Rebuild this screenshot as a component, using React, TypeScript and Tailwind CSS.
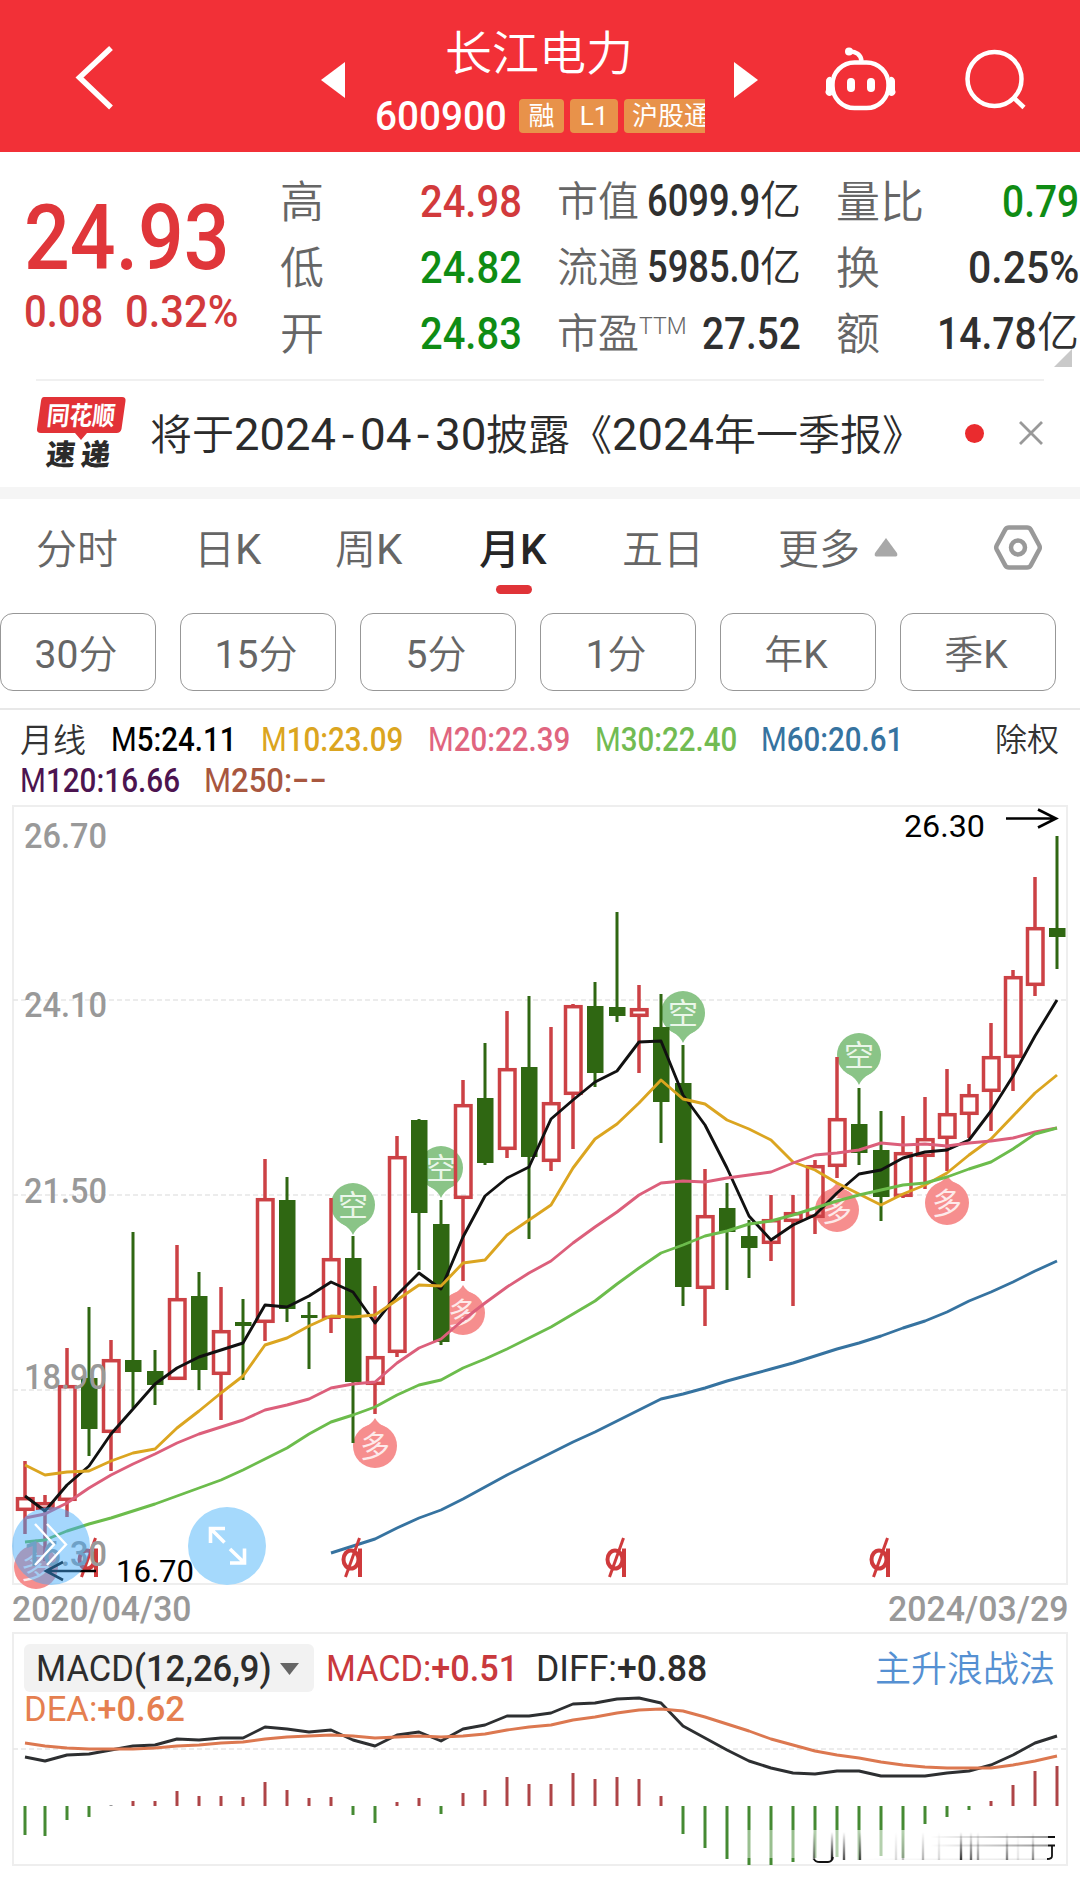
import { useLayoutEffect, useRef, type ReactNode } from "react";
import clsx from "clsx";

type Candle = [up: 0 | 1, high: number, top: number, bottom: number, low: number];

const candles: Candle[] = [
  [1, 1460, 1496, 1510, 1533], [1, 1494, 1501, 1509, 1560], [1, 1347, 1384, 1500, 1516], [0, 1306, 1377, 1428, 1455],
  [1, 1339, 1358, 1432, 1470], [0, 1231, 1359, 1371, 1407], [0, 1349, 1370, 1384, 1404], [1, 1244, 1297, 1379, 1379],
  [0, 1271, 1295, 1369, 1389], [1, 1286, 1329, 1374, 1419], [0, 1298, 1321, 1325, 1379], [1, 1158, 1197, 1322, 1340],
  [0, 1176, 1199, 1308, 1321], [0, 1301, 1314, 1317, 1368], [1, 1197, 1257, 1318, 1332], [0, 1235, 1257, 1381, 1442],
  [1, 1285, 1355, 1384, 1413], [1, 1135, 1155, 1352, 1356], [0, 1118, 1119, 1212, 1269], [0, 1199, 1223, 1341, 1344],
  [1, 1079, 1103, 1198, 1280], [0, 1042, 1097, 1162, 1164], [1, 1010, 1067, 1149, 1157], [0, 995, 1066, 1156, 1238],
  [1, 1026, 1101, 1161, 1170], [1, 1003, 1004, 1094, 1148], [0, 981, 1005, 1072, 1086], [0, 911, 1006, 1015, 1021],
  [1, 984, 1007, 1016, 1072], [0, 993, 1026, 1101, 1142], [0, 1044, 1082, 1286, 1305], [1, 1168, 1214, 1288, 1325],
  [0, 1182, 1207, 1231, 1289], [0, 1219, 1235, 1247, 1277], [1, 1194, 1218, 1243, 1260], [1, 1194, 1211, 1221, 1305],
  [1, 1159, 1164, 1217, 1233], [1, 1056, 1117, 1166, 1177], [0, 1087, 1123, 1152, 1164], [0, 1110, 1149, 1196, 1220],
  [1, 1115, 1151, 1196, 1197], [1, 1096, 1137, 1156, 1188], [1, 1068, 1112, 1138, 1170], [1, 1083, 1093, 1114, 1137],
  [1, 1022, 1055, 1091, 1130], [1, 969, 975, 1057, 1090], [1, 876, 926, 985, 995], [0, 835, 927, 936, 968],
];

const ma5 = [1495, 1510, 1484, 1465, 1433, 1408, 1383, 1367, 1356, 1349, 1342, 1304, 1306, 1295, 1281, 1291, 1322, 1294, 1272, 1288, 1236, 1195, 1177, 1166, 1118, 1099, 1081, 1070, 1041, 1040, 1094, 1124, 1167, 1215, 1239, 1224, 1214, 1192, 1173, 1169, 1157, 1151, 1149, 1139, 1110, 1075, 1035, 999];
const ma10 = [1464, 1474, 1471, 1470, 1460, 1452, 1448, 1427, 1410, 1392, 1375, 1344, 1337, 1325, 1315, 1316, 1314, 1299, 1284, 1285, 1262, 1259, 1234, 1219, 1204, 1167, 1138, 1123, 1102, 1079, 1098, 1103, 1119, 1128, 1139, 1161, 1169, 1182, 1193, 1204, 1193, 1184, 1172, 1154, 1138, 1115, 1092, 1074];
const ma20 = [1517, 1513, 1502, 1487, 1474, 1463, 1453, 1442, 1433, 1426, 1419, 1409, 1404, 1398, 1387, 1383, 1381, 1362, 1347, 1338, 1319, 1302, 1286, 1272, 1260, 1242, 1226, 1211, 1194, 1182, 1180, 1181, 1177, 1174, 1171, 1162, 1154, 1152, 1149, 1142, 1144, 1143, 1145, 1142, 1140, 1137, 1131, 1127];
const ma30 = [1541, 1539, 1530, 1523, 1517, 1510, 1503, 1495, 1487, 1479, 1469, 1458, 1447, 1433, 1421, 1414, 1406, 1394, 1384, 1379, 1367, 1358, 1348, 1337, 1326, 1313, 1300, 1283, 1267, 1252, 1244, 1235, 1230, 1223, 1220, 1214, 1207, 1200, 1194, 1189, 1184, 1182, 1176, 1168, 1161, 1148, 1133, 1127];
const ma60 = [1552, 1545, 1538, 1527, 1517, 1509, 1498, 1486, 1474, 1463, 1452, 1441, 1431, 1420, 1409, 1398, 1393, 1387, 1380, 1374, 1368, 1362, 1355, 1348, 1342, 1335, 1327, 1320, 1311, 1300, 1291, 1281, 1270, 1260];

const diff = [1757, 1761, 1755, 1754, 1750, 1746, 1745, 1739, 1740, 1738, 1738, 1727, 1729, 1732, 1730, 1740, 1746, 1735, 1732, 1741, 1729, 1725, 1716, 1716, 1713, 1704, 1703, 1699, 1698, 1703, 1726, 1738, 1750, 1761, 1768, 1773, 1774, 1771, 1771, 1776, 1776, 1776, 1773, 1771, 1765, 1755, 1743, 1736];
const dea = [1743, 1746, 1748, 1749, 1749, 1749, 1748, 1746, 1745, 1743, 1742, 1739, 1737, 1736, 1735, 1736, 1738, 1737, 1736, 1737, 1736, 1734, 1730, 1727, 1725, 1720, 1717, 1713, 1710, 1709, 1711, 1717, 1724, 1731, 1739, 1745, 1751, 1755, 1758, 1762, 1765, 1767, 1768, 1768, 1768, 1765, 1761, 1756];
const bars = [1835, 1836, 1820, 1817, 1805, 1801, 1801, 1791, 1796, 1796, 1797, 1782, 1790, 1798, 1797, 1815, 1823, 1802, 1798, 1814, 1793, 1790, 1777, 1784, 1784, 1773, 1779, 1777, 1779, 1796, 1834, 1848, 1859, 1865, 1865, 1862, 1858, 1857, 1860, 1856, 1858, 1824, 1817, 1810, 1801, 1785, 1771, 1766];
const BAR_BASE = 1806;

const xAt = (i: number) => (i === 0 ? 25 : 23 + i * 22);
const toPoints = (ys: number[], from = 0) => ys.map((y, i) => `${xAt(i + from)},${y}`).join(" ");

const shortPins = [[353, 1204], [441, 1167], [683, 1012], [859, 1054]];
const longPins = [[36, 1566], [375, 1445], [463, 1312], [837, 1209], [947, 1202]];

// Squeezes its text horizontally so that it takes exactly w pixels
function Fit({ w, className, children }: { w: number; className?: string; children: ReactNode }) {
  const ref = useRef<HTMLSpanElement>(null);
  useLayoutEffect(() => {
    const el = ref.current;
    if (el) el.style.transform = `scaleX(${w / el.offsetWidth})`;
  }, [w]);
  return (
    <span className={clsx("inline-block shrink-0 whitespace-nowrap", className)} style={{ width: w }}>
      <span ref={ref} className="inline-block origin-left">
        {children}
      </span>
    </span>
  );
}

function Header() {
  return (
    <header className="flex h-[152px] items-start bg-[#f23037] text-white">
      <svg className="ml-[70px] mt-10 h-[76px] w-[50px]" viewBox="70 40 50 76" fill="none" stroke="white" strokeWidth="5.5">
        <path d="M111 48 79.500 77.500 111 107.500" />
      </svg>
      <svg className="ml-[201px] mt-[60px] h-10 w-6" viewBox="321 60 24 40" fill="white">
        <path d="M321 80 345 62V98Z" />
      </svg>
      <div className="ml-[30px] w-[330px] pt-[30px]">
        <h1 className="pl-[70px] text-[47px] leading-[47px] font-[350]">长江电力</h1>
        <div className="mt-[22px] flex h-[34px] items-center">
          <Fit w={132} className="text-[41px] leading-[44px] font-medium">600900</Fit>
          <div className="ml-3 flex w-[186px] gap-1.5 overflow-hidden text-[26px] leading-[34px] font-normal">
            <span className="w-[45px] shrink-0 rounded bg-[#e8924a] text-center">融</span>
            <span className="w-12 shrink-0 rounded bg-[#e8924a] text-center">L1</span>
            <span className="shrink-0 rounded bg-[#e8924a] pr-2.5 pl-2">沪股通</span>
          </div>
        </div>
      </div>
      <svg className="ml-[29px] mt-[60px] h-10 w-6" viewBox="735 60 24 40" fill="white">
        <path d="M759 80 735 62V98Z" />
      </svg>
      <svg className="ml-[64px] mt-10 h-20 w-20" viewBox="822 40 80 80" fill="none" stroke="white" strokeWidth="4.500">
        <rect x="832.500" y="62.500" width="56" height="45.500" rx="22" />
        <path d="M849 51.500C856 51 861 55 861.500 61" />
        <circle cx="849" cy="51.500" r="4" fill="white" stroke="none" />
        <path d="M831 77a4 4 0 0 0-5 4v9a4 4 0 0 0 6 5ZM890 77a4 4 0 0 1 5 4v9a4 4 0 0 1-6 5Z" fill="white" stroke="none" />
        <path d="M851 82v6M871 82v6" strokeWidth="8" strokeLinecap="round" />
      </svg>
      <svg className="ml-[58px] mt-10 h-20 w-20" viewBox="960 40 80 80" fill="none" stroke="white" strokeWidth="4.500">
        <circle cx="994.500" cy="79" r="27" />
        <path d="m1013 97 11 10.500" />
      </svg>
    </header>
  );
}

function QuoteRow({ label, children }: { label: ReactNode; children: ReactNode }) {
  return (
    <div className="flex h-[66px] items-center justify-between">
      <span className="-ml-px flex pt-[3px] text-[#666] font-[350]">{label}</span>
      <span className="flex items-center font-medium text-[#303030]">{children}</span>
    </div>
  );
}

function Quote() {
  return (
    <section className="relative flex h-[227px] pt-4 text-[44px] leading-none">
      <div className="w-[281px] pl-6 text-[#e0363a]">
        <Fit w={206} className="mt-[26px] text-[90px] font-medium">24.93</Fit>
        <div className="mt-[5px] flex gap-[22px] text-[45px] font-medium text-[#d23a3c]">
          <Fit w={79}>0.08</Fit>
          <Fit w={113}>0.32%</Fit>
        </div>
      </div>
      <div className="w-[241px]">
        <QuoteRow label="高"><Fit w={102} className="text-[45px] text-[#d23a3c]">24.98</Fit></QuoteRow>
        <QuoteRow label="低"><Fit w={102} className="text-[45px] text-[#0f8c14]">24.82</Fit></QuoteRow>
        <QuoteRow label="开"><Fit w={102} className="text-[45px] text-[#0f8c14]">24.83</Fit></QuoteRow>
      </div>
      <div className="ml-9 w-[243px] text-[41px]">
        <QuoteRow label="市值">
          <Fit w={113} className="text-[44px]">6099.9</Fit>
          <span className="font-[350]">亿</span>
        </QuoteRow>
        <QuoteRow label="流通">
          <Fit w={113} className="text-[44px]">5985.0</Fit>
          <span className="font-[350]">亿</span>
        </QuoteRow>
        <QuoteRow label={<>市盈<Fit w={48} className="pt-px text-[23px] font-light">TTM</Fit></>}>
          <Fit w={99} className="text-[45px]">27.52</Fit>
        </QuoteRow>
      </div>
      <div className="ml-9 w-[242px]">
        <QuoteRow label="量比"><Fit w={77} className="text-[45px] text-[#0f8c14]">0.79</Fit></QuoteRow>
        <QuoteRow label="换"><Fit w={111} className="text-[45px]">0.25%</Fit></QuoteRow>
        <QuoteRow label="额">
          <Fit w={100} className="text-[45px]">14.78</Fit>
          <span className="text-[42px] font-[350]">亿</span>
        </QuoteRow>
      </div>
      <svg className="absolute right-2 bottom-3 size-[18px]" viewBox="0 0 18 18" fill="#c9c9c9">
        <path d="M18 0V18H0Z" />
      </svg>
    </section>
  );
}

function News() {
  return (
    <section className="mx-9 flex h-[108px] border-t-2 border-[#f0f0f0] leading-none">
      <div className="relative mt-4 w-[90px] shrink-0">
        <svg className="absolute inset-0 h-11 w-[90px]" viewBox="36 397 90 44" fill="#e23237">
          <path d="M44 397h78q4 0 3.500 4l-4 28q-1 4-5 4H87l-6 7-6-7H41q-4.500 0-4-4l4-28q.5-4 3-4Z" />
        </svg>
        <div className="relative pt-[7px] text-center">
          <Fit w={68} className="-skew-x-6 text-[26px] leading-[25px] font-bold text-white">同花顺</Fit>
        </div>
        <div className="flex -skew-x-6 justify-center gap-1.5 pt-[12px] pr-1 text-[29px] leading-[29px] font-black text-[#2b2b2b]">
          <span>速</span>
          <span>递</span>
        </div>
      </div>
      <div className="ml-6 flex w-[766px] shrink-0 items-center pt-[3px] text-[42px] font-[350] whitespace-nowrap text-[#2b2b2b]">
        <span className="shrink-0">将于</span>
        <Fit w={102} className="-mt-0.5 text-[44px] font-normal">2024</Fit>
        <span className="-mt-0.5 w-6 shrink-0 text-center text-[44px] font-normal">-</span>
        <Fit w={51} className="-mt-0.5 text-[44px] font-normal">04</Fit>
        <span className="-mt-0.5 w-6 shrink-0 text-center text-[44px] font-normal">-</span>
        <Fit w={51} className="-mt-0.5 text-[44px] font-normal">30</Fit>
        <span className="shrink-0">披露《</span>
        <Fit w={102} className="-mt-0.5 text-[44px] font-normal">2024</Fit>
        <span className="shrink-0">年一季报》</span>
      </div>
      <span className="mt-[43px] ml-[49px] size-[19px] shrink-0 rounded-full bg-[#ea2b2e]" />
      <svg className="mt-10 ml-[35px] size-6 shrink-0" viewBox="0 0 24 24" stroke="#999" strokeWidth="2.800">
        <path d="M1 1 23 23M23 1 1 23" />
      </svg>
    </section>
  );
}

function Tabs() {
  return (
    <nav className="flex h-[114px] items-start pt-[29px] pl-9 text-[41px] leading-[44px] font-[350] text-[#666]">
      <span className="w-[158px]">分时</span>
      <span className="w-[141px]">日<span className="text-[42px] font-normal">K</span></span>
      <span className="w-[144px]">周<span className="text-[42px] font-normal">K</span></span>
      <span className="flex w-[143px] flex-col font-medium text-[#262626]">
        <span>月<span className="text-[42px]">K</span></span>
        <i className="mt-[13px] ml-[17px] h-[9px] w-9 rounded-full bg-[#e03338]" />
      </span>
      <span className="w-[156px]">五日</span>
      <span>更多</span>
      <svg className="mt-2.5 ml-[14px] h-[19px] w-6" viewBox="0 0 24 19" fill="#a8a8a8">
        <path d="M12 0 23 15q1 3-1 3.500H2Q0 18 1 15Z" />
      </svg>
      <svg className="-mt-1.5 ml-[94px] size-[52px]" viewBox="994 521 52 52" fill="none" stroke="#999" strokeWidth="4.500">
        <path d="M1011 526.500h18q2.500 0 3.800 2.200l8.500 15.800q1 2 0 4l-8.500 15.800q-1.300 2.200-3.800 2.200h-18q-2.500 0-3.800-2.200l-8.500-15.800q-1-2 0-4l8.500-15.800q1.300-2.200 3.800-2.200Z" />
        <circle cx="1020" cy="546.500" r="7" />
      </svg>
    </nav>
  );
}

function Periods() {
  return (
    <div className="flex h-[97px] gap-6 border-b-2 border-[#e8e8e8]">
      {[["30", "分"], ["15", "分"], ["5", "分"], ["1", "分"], ["年", "K"], ["季", "K"]].map(([a, b]) => (
        <button
          key={a}
          className="flex h-[78px] w-[156px] shrink-0 items-center justify-center rounded-[13px] border border-[#979797] pt-1.5 pr-1 text-[39px] leading-none font-[350] text-[#666]"
        >
          <span className={clsx(b === "分" && "font-normal")}>{a}</span>
          <span className={clsx(b === "K" && "font-normal")}>{b}</span>
        </button>
      ))}
    </div>
  );
}

function Ma({ name, value, w, className }: { name: string; value: string; w: number; className: string }) {
  return (
    <Fit w={w} className={className}>
      <span className="font-normal">M</span>
      {name}:{value}
    </Fit>
  );
}

function Legend() {
  return (
    <div className="h-[94px] pt-2 pl-5 text-[33px] leading-none font-medium">
      <div className="flex h-[42px] items-center">
        <span className="w-[91px] pt-0.5 font-[350] text-[#333]">月线</span>
        <Ma name="5" value="24.11" w={125} className="text-black" />
        <Ma name="10" value="23.09" w={142} className="ml-[25px] text-[#dba520]" />
        <Ma name="20" value="22.39" w={142} className="ml-[25px] text-[#e0657f]" />
        <Ma name="30" value="22.40" w={142} className="ml-[25px] text-[#72bb52]" />
        <Ma name="60" value="20.61" w={142} className="ml-6 text-[#3673a0]" />
        <span className="ml-[92px] pt-0.5 text-[32px] font-[350] text-[#333]">除权</span>
      </div>
      <div className="flex h-10 items-center">
        <Ma name="120" value="16.66" w={160} className="text-[#4c1450]" />
        <Ma name="250" value="−−" w={123} className="ml-6 text-[#a8573f]" />
      </div>
    </div>
  );
}

function ExMark({ x }: { x: number }) {
  return (
    <g transform={`translate(${x} 0)`} fill="none" stroke="#cf3a3c" strokeWidth="4">
      <path d="M7 1547.500V1576" />
      <ellipse cx="-2" cy="1558.500" rx="7.500" ry="9" />
      <path d="M6.500 1537-7.500 1576" strokeWidth="3" />
    </g>
  );
}

function Axis({ x, y, w, children, size = 35, className = "fill-[#999] font-medium" }: { x: number; y: number; w: number; children: string; size?: number; className?: string }) {
  return (
    <text x={x} y={y} fontSize={size} textLength={w} lengthAdjust="spacingAndGlyphs" className={className}>
      {children}
    </text>
  );
}

function KChart() {
  return (
    <svg className="block h-[782px] w-[1080px] overflow-visible" viewBox="0 803 1080 782" fill="none">
      <rect x="13" y="805" width="1054" height="778" stroke="#eee" strokeWidth="2" />
      {[999, 1194, 1389].map((y) => (
        <path key={y} d={`M13 ${y}H1066`} stroke="#e6e6e6" strokeWidth="1.500" strokeDasharray="5 3" />
      ))}

      {shortPins.map(([x, y]) => (
        <g key={x}>
          <path d={`M${x - 12} ${y + 18}Q${x - 3} ${y + 23} ${x} ${y + 30}Q${x + 3} ${y + 23} ${x + 12} ${y + 18}Z`} fill="#8ac487" />
          <circle cx={x} cy={y} r="22" fill="#8ac487" />
          <text x={x} y={y + 11} fontSize="30" textAnchor="middle" className="fill-[#eaf6e9]">空</text>
        </g>
      ))}
      {longPins.map(([x, y]) => (
        <g key={x}>
          <path d={`M${x - 12} ${y - 18}Q${x - 3} ${y - 22} ${x} ${y - 28}Q${x + 3} ${y - 22} ${x + 12} ${y - 18}Z`} fill="#f68e8e" />
          <circle cx={x} cy={y} r="22" fill="#f68e8e" />
          <text x={x} y={y + 11} fontSize="30" textAnchor="middle" className="fill-[#fdeaea]">多</text>
        </g>
      ))}

      {candles.map(([up, high, top, bottom, low], i) => {
        const x = xAt(i);
        return up ? (
          <g key={i} stroke="#cc4145" strokeWidth="3.500">
            <path d={`M${x} ${high}V${top}M${x} ${bottom}V${low}`} />
            <rect x={x - 7.5} y={top + 1.7} width="15.500" height={Math.max(bottom - top - 3.4, 1)} />
          </g>
        ) : (
          <g key={i} fill="#2f6712">
            <rect x={x - 1.5} y={high} width="3" height={low - high} />
            <rect x={x - 8} y={top} width="16.500" height={bottom - top} />
          </g>
        );
      })}

      <g strokeWidth="2.900" strokeLinejoin="round">
        <polyline points={toPoints(ma5)} stroke="#111" />
        <polyline points={toPoints(ma10)} stroke="#dba520" />
        <polyline points={toPoints(ma20)} stroke="#dc5f7b" />
        <polyline points={toPoints(ma30)} stroke="#6cbc4c" />
        <polyline points={toPoints(ma60, 14)} stroke="#3673a0" />
      </g>

      {[89, 353, 617, 881].map((x) => (
        <ExMark key={x} x={x} />
      ))}

      <Axis x={24} y={847} w={83}>26.70</Axis>
      <Axis x={24} y={1016} w={83}>24.10</Axis>
      <Axis x={24} y={1202} w={83}>21.50</Axis>
      <Axis x={24} y={1388} w={83}>18.90</Axis>
      <Axis x={24} y={1565} w={83}>16.30</Axis>

      <Axis x={904} y={836} w={81} size={31} className="fill-black">26.30</Axis>
      <path d="M1006 817.500H1056M1038 808.500 1056 817.500 1038 826.500" stroke="#000" strokeWidth="2.600" />
      <Axis x={116} y={1581} w={78} size={31} className="fill-black">16.70</Axis>
      <path d="M96 1570H46M63 1561 46 1570 63 1579" stroke="#000" strokeWidth="2.600" />

      <circle cx="51" cy="1545" r="39" fill="#3fa9fb" fillOpacity=".47" />
      <path d="M35 1523 54 1543.500 35 1564M47 1523 66 1543.500 47 1564" stroke="#fff" strokeWidth="2.400" />
      <circle cx="227" cy="1545" r="39" fill="#a5d9fc" />
      <path d="M225 1527.500H210.500V1542M210.500 1527.500 224.500 1541.500M230 1562H244.500V1547.500M244.500 1562 230 1548" stroke="#fff" strokeWidth="3.600" />
    </svg>
  );
}

function Watermark() {
  const streaks: [number, number][] = [
    [814, 0.5], [832, 0.9], [844, 0.7], [860, 0.7], [896, 0.15], [903, 0.25], [923, 0.3], [939, 0.15],
    [961, 0.8], [971, 0.6], [978, 0.4], [1007, 0.5], [1018, 0.1], [1033, 0.45],
  ];
  return (
    <g>
      <defs>
        <linearGradient id="fade" x1="0" y1="0" x2="0" y2="1">
          <stop offset="0" stopColor="#000" stopOpacity="0" />
          <stop offset="1" stopColor="#000" />
        </linearGradient>
        <linearGradient id="side" x1="0" y1="0" x2="1" y2="0">
          <stop offset="0" stopColor="#000" stopOpacity="0" />
          <stop offset="1" stopColor="#000" stopOpacity=".4" />
        </linearGradient>
      </defs>
      <rect x="745" y="1830" width="65" height="28" fill="#fff" fillOpacity=".45" />
      <rect x="810" y="1830" width="235" height="32" fill="#fff" fillOpacity=".6" />
      {streaks.map(([x, o]) => (
        <rect key={x} x={x - 1.2} y="1832" width="2.400" height="28" fill="url(#fade)" opacity={o} />
      ))}
      <path d="M814 1859Q815 1862 820 1862H828Q832 1862 833 1857" stroke="#111" strokeWidth="1.800" />
      <rect x="930" y="1836" width="118" height="2" fill="url(#side)" />
      <rect x="930" y="1844.500" width="118" height="2" fill="url(#side)" />
      <rect x="850" y="1858.500" width="198" height="1.500" fill="url(#side)" opacity=".25" />
      <path d="M1048 1837H1055M1048 1845.500H1055M1052 1846V1856Q1052 1859 1047 1859" stroke="#111" strokeWidth="1.800" />
    </g>
  );
}

function Macd() {
  return (
    <section className="relative h-[253px] leading-none">
      <svg className="absolute inset-0 h-[253px] w-[1080px]" viewBox="0 1632 1080 253" fill="none">
        <rect x="13" y="1633" width="1054" height="232" stroke="#eee" strokeWidth="2" />
        <path d="M13 1749H1066" stroke="#e6e6e6" strokeWidth="1.500" strokeDasharray="5 3" />
        {bars.map((y, i) => (
          <rect
            key={i}
            x={xAt(i) - 1.5}
            y={Math.min(y, BAR_BASE)}
            width="3"
            height={Math.abs(y - BAR_BASE)}
            fill={i === 4 ? "#999" : y < BAR_BASE ? "#ae4447" : "#458a33"}
          />
        ))}
        <g strokeWidth="2.900" strokeLinejoin="round">
          <polyline points={toPoints(diff)} stroke="#2d2f31" />
          <polyline points={toPoints(dea)} stroke="#dc7850" />
        </g>
        <Watermark />
      </svg>
      <div className="relative flex items-center pt-3 pl-6 text-[36px]">
        <div className="flex h-12 w-[290px] items-center rounded-md bg-[#f2f2f2] pt-0.5 pl-3 text-[#2d2d2d]">
          <Fit w={236}>
            MACD<span className="font-medium">(12,26,9)</span>
          </Fit>
          <svg className="ml-2 h-3 w-[19px]" viewBox="0 0 19 12" fill="#666">
            <path d="M0 0H19L9.500 12Z" />
          </svg>
        </div>
        <Fit w={192} className="ml-3 pt-0.5 text-[#c9393d]">
          MACD:<span className="font-medium">+0.51</span>
        </Fit>
        <Fit w={171} className="ml-[18px] pt-0.5 text-[#2d2d2d]">
          DIFF:<span className="font-medium">+0.88</span>
        </Fit>
        <span className="ml-[168px] pt-[3px] font-[350] whitespace-nowrap text-[#5590d2]">主升浪战法</span>
      </div>
      <Fit w={161} className="relative ml-6 text-[35px] text-[#e57f50]">
        DEA:<span className="font-medium">+0.62</span>
      </Fit>
    </section>
  );
}

export default function App() {
  return (
    <main className="h-[1885px] w-[1080px] overflow-hidden bg-white font-['Roboto','Noto_Sans_CJK_SC',sans-serif]">
      <Header />
      <Quote />
      <News />
      <div className="h-3 bg-[#f5f5f5]" />
      <Tabs />
      <Periods />
      <Legend />
      <KChart />
      <div className="flex h-[46px] items-center justify-between px-3 text-[35px] leading-none font-medium text-[#999]">
        <Fit w={179}>2020/04/30</Fit>
        <Fit w={180}>2024/03/29</Fit>
      </div>
      <Macd />
    </main>
  );
}
